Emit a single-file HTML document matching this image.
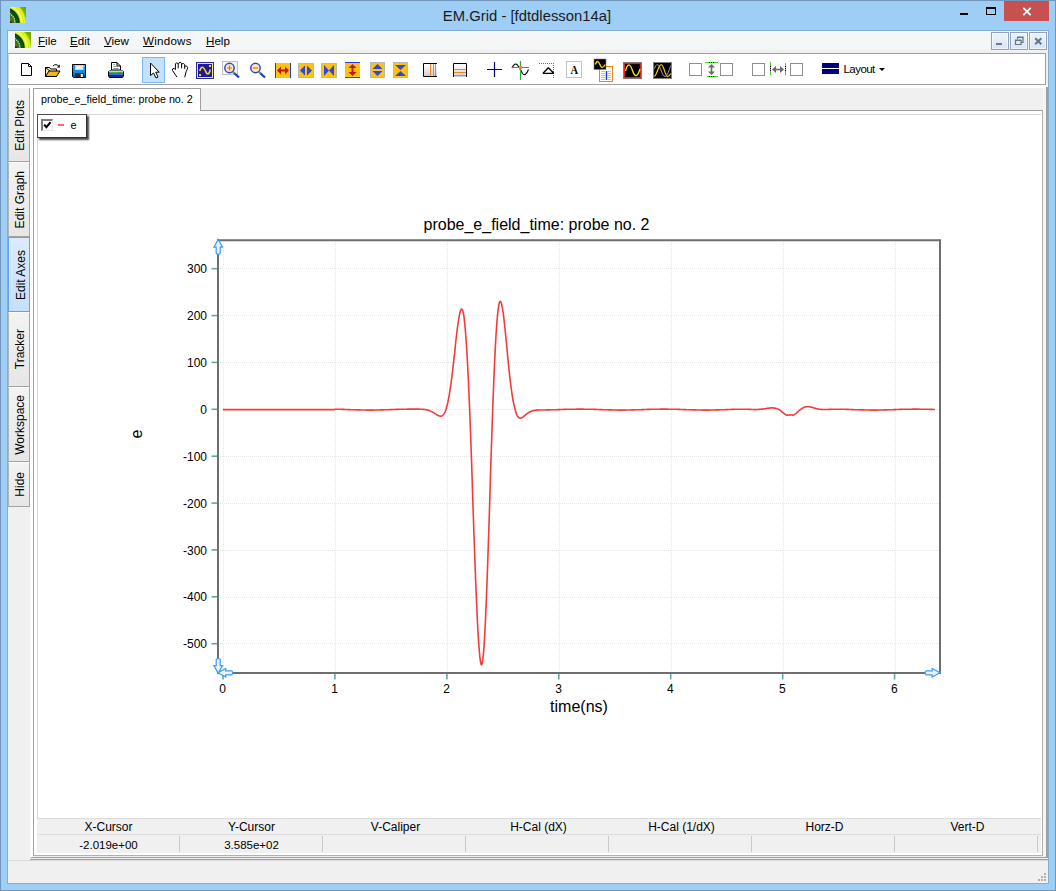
<!DOCTYPE html>
<html>
<head>
<meta charset="utf-8">
<title>EM.Grid - [fdtdlesson14a]</title>
<style>
*{box-sizing:border-box;margin:0;padding:0}
html,body{width:1056px;height:891px;overflow:hidden}
body{position:relative;background:#9ecef5;font-family:"Liberation Sans",sans-serif;color:#000}
.abs{position:absolute}
#frame{left:0;top:0;width:1056px;height:891px;border:1px solid #7097ba}
#title{left:-1px;top:5.5px;width:1056px;text-align:center;font-size:14.85px;line-height:20px;color:#1a1a1a}
#client{left:8px;top:31px;width:1040px;height:852px;background:#f0f0f0}
#menubar{left:8px;top:31px;width:1040px;height:18px;background:#f5f6f7}
.menu{top:34px;font-size:11.6px;line-height:14px;height:16px;white-space:nowrap}
.menu u{text-decoration:underline;text-underline-offset:1px;text-decoration-thickness:1px}
#toolbar{left:8px;top:53px;width:1038px;height:32px;background:#fff;border-top:1px solid #a0a0a0;border-bottom:1px solid #a0a0a0;border-left:1px solid #d4d4d4;border-right:1px solid #a0a0a0}
.vtab{left:8px;width:22px;background:linear-gradient(#f3f3f3,#e6e6e6);border-left:1px solid #b4b4b4;border-right:1px solid #a6a6a6;border-bottom:1px solid #a3a3a3;border-top:1px solid #fafafa;display:flex;align-items:center;justify-content:center}
.vtab span{font-kerning:none;writing-mode:vertical-rl;transform:rotate(180deg);white-space:nowrap;font-size:12px;line-height:14px;position:relative;left:0.5px;top:0px}
.hdr{top:820px;font-size:12px;line-height:14px;text-align:center;width:143px}
.val{top:838px;font-size:11.5px;line-height:14px;text-align:center;width:143px}
.sep{top:836px;width:1px;height:16px;background:#c8c8c8}
.cb{top:63px;width:13px;height:13px;border:1px solid #8e8f8f;background:#fff}
</style>
</head>
<body>
<div id="frame" class="abs"></div>
<div id="title" class="abs">EM.Grid - [fdtdlesson14a]</div>

<!-- window buttons -->
<div class="abs" style="left:960px;top:13px;width:8px;height:2px;background:#000"></div>
<div class="abs" style="left:986px;top:7px;width:10px;height:8px;border:1px solid #000;border-top-width:2px"></div>
<div class="abs" style="left:1004px;top:1px;width:45px;height:20px;background:#c75050"></div>
<svg class="abs" style="left:1004px;top:1px" width="45" height="20"><path d="M19.3 6.8 L26.7 14.2 M26.7 6.8 L19.3 14.2" stroke="#fff" stroke-width="1.8" fill="none"/></svg>

<div class="abs" style="left:7px;top:30px;width:1042px;height:854px;border:1px solid #84aed6"></div>
<div id="client" class="abs"></div>
<div id="menubar" class="abs"></div>
<div class="abs" style="left:8px;top:49px;width:1040px;height:4px;background:linear-gradient(#f3f3f4,#eeeeee)"></div>

<!-- app icons -->
<svg class="abs" style="left:10px;top:7px" width="16" height="16" viewBox="0 0 16 16">
<defs><clipPath id="ac"><rect width="16" height="16"/></clipPath>
<radialGradient id="ag" gradientUnits="userSpaceOnUse" cx="-6" cy="16" r="26">
<stop offset="0" stop-color="#56841a"/><stop offset="0.30" stop-color="#4e7c10"/><stop offset="0.41" stop-color="#3a6808"/>
<stop offset="0.45" stop-color="#0c4c0a"/><stop offset="0.52" stop-color="#0a5a10"/><stop offset="0.585" stop-color="#003a00"/><stop offset="0.615" stop-color="#98c418"/>
<stop offset="0.65" stop-color="#f2f83a"/><stop offset="0.72" stop-color="#f8fc44"/><stop offset="0.755" stop-color="#c4e426"/>
<stop offset="0.785" stop-color="#eef63a"/><stop offset="0.83" stop-color="#b8ee10"/><stop offset="0.875" stop-color="#82b600"/><stop offset="1" stop-color="#74a200"/>
</radialGradient></defs>
<g clip-path="url(#ac)">
<rect width="16" height="16" fill="url(#ag)"/>
<circle cx="-6" cy="16" r="11" fill="none" stroke="#f4f4ee" stroke-width="1.300" stroke-dasharray="1.200 1"/>
<circle cx="0" cy="16.500" r="2.600" fill="#2c2432"/>
</g></svg>
<svg class="abs" style="left:15px;top:32px" width="16" height="16" viewBox="0 0 16 16">
<defs><clipPath id="bc"><rect width="16" height="16"/></clipPath>
<radialGradient id="bg" gradientUnits="userSpaceOnUse" cx="-6" cy="16" r="26">
<stop offset="0" stop-color="#56841a"/><stop offset="0.30" stop-color="#4e7c10"/><stop offset="0.41" stop-color="#3a6808"/>
<stop offset="0.45" stop-color="#0c4c0a"/><stop offset="0.52" stop-color="#0a5a10"/><stop offset="0.585" stop-color="#003a00"/><stop offset="0.615" stop-color="#98c418"/>
<stop offset="0.65" stop-color="#f2f83a"/><stop offset="0.72" stop-color="#f8fc44"/><stop offset="0.755" stop-color="#c4e426"/>
<stop offset="0.785" stop-color="#eef63a"/><stop offset="0.83" stop-color="#b8ee10"/><stop offset="0.875" stop-color="#82b600"/><stop offset="1" stop-color="#74a200"/>
</radialGradient></defs>
<g clip-path="url(#bc)">
<rect width="16" height="16" fill="url(#bg)"/>
<circle cx="-6" cy="16" r="11" fill="none" stroke="#f4f4ee" stroke-width="1.300" stroke-dasharray="1.200 1"/>
<circle cx="0" cy="16.500" r="2.600" fill="#2c2432"/>
</g></svg>

<div class="abs menu" style="left:38px"><u>F</u>ile</div>
<div class="abs menu" style="left:70px"><u>E</u>dit</div>
<div class="abs menu" style="left:104px"><u>V</u>iew</div>
<div class="abs menu" style="left:143px;letter-spacing:0.25px"><u>W</u>indows</div>
<div class="abs menu" style="left:206px"><u>H</u>elp</div>

<!-- MDI buttons -->
<div class="abs" style="left:991px;top:32px;width:18px;height:18px;background:linear-gradient(#edf3fb,#d8e5f4);border:1px solid #8ea2bd;box-shadow:inset 0 0 0 1px rgba(255,255,255,0.55)"></div>
<div class="abs" style="left:1010px;top:32px;width:18px;height:18px;background:linear-gradient(#edf3fb,#d8e5f4);border:1px solid #8ea2bd;box-shadow:inset 0 0 0 1px rgba(255,255,255,0.55)"></div>
<div class="abs" style="left:1029px;top:32px;width:18px;height:18px;background:linear-gradient(#edf3fb,#d8e5f4);border:1px solid #8ea2bd;box-shadow:inset 0 0 0 1px rgba(255,255,255,0.55)"></div>
<svg class="abs" style="left:991px;top:32px" width="56" height="18">
<rect x="5" y="11" width="6" height="2" fill="#6b7b8f"/>
<path d="M26.5 7 v-1.500 h5.500 v5 h-1.500 M24.500 8.500 h5.500 v4 h-5.500 z" stroke="#64758a" stroke-width="1.2" fill="none"/><path d="M26 5.300 h6.500 M24 8.300 h6.500" stroke="#64758a" stroke-width="1.600"/>
<path d="M44.200 6.200 L50.300 12.300 M50.300 6.200 L44.200 12.300" stroke="#64758a" stroke-width="2" fill="none"/>
</svg>

<div id="toolbar" class="abs"></div>
<svg class="abs" style="left:0;top:54px" width="1056" height="30" viewBox="0 54 1056 30">
<path d="M21.5 63.5 h7 l3 3 v9 h-10 z" fill="#fff" stroke="#000"/><path d="M28.5 63.5 v3 h3" fill="none" stroke="#000"/>
<path d="M45.5 67.5 h4 l1 1.5 h6 v2" fill="#ffe9a0" stroke="#000"/><path d="M45.5 67.5 v9 h11 z" fill="#ffe9a0" stroke="#000" stroke-width="1"/><path d="M45.5 76.5 l3.5 -5.5 h11 l-3.5 5.5 z" fill="#f5b800" stroke="#000"/><path d="M53 66 q3 -3 6 0.5" fill="none" stroke="#000"/><path d="M59.8 64.5 v3 h-3 z" fill="#000"/>
<defs><linearGradient id="gf" x1="0" y1="0" x2="0" y2="1"><stop offset="0" stop-color="#28a4ec"/><stop offset="0.6" stop-color="#1488e0"/><stop offset="1" stop-color="#1040b8"/></linearGradient></defs>
<path d="M72.500 64.500 h13 v13 h-12 l-1 -1 z" fill="url(#gf)" stroke="#000"/><rect x="75" y="65" width="8.500" height="5" fill="#d4d4d4"/><rect x="76" y="66" width="6.500" height="3" fill="#f0f0f0"/><rect x="75" y="73.300" width="9" height="4.200" fill="#2c2c2c"/><rect x="80.800" y="74" width="2" height="3" fill="#fff"/><rect x="84" y="65.500" width="1" height="1" fill="#d0e8f8"/>
<path d="M111.500 70 v-7.500 h5.500 l3.500 3.500 v4 z" fill="#fff" stroke="#000"/><path d="M117 62.500 v3.500 h3.500" fill="none" stroke="#000"/><path d="M113.500 64.500 h1.500 M113.500 66.500 h3 M113.500 68.500 h5" stroke="#8c8c8c"/><path d="M109.500 70.500 h13 l1 1.500 v4 l-1 1.500 h-13 l-1 -1.500 v-4 z" fill="#142a98" stroke="#000"/><rect x="109" y="70.500" width="14" height="1.600" fill="#a4e0ee"/><rect x="109" y="72.100" width="14" height="1.400" fill="#58b848"/><rect x="109" y="73.500" width="14" height="1.500" fill="#2c74d8"/><rect x="119" y="72.100" width="2.500" height="1.400" fill="#e83838"/>
<rect x="142.5" y="57.5" width="22" height="25" fill="#c3e0fd" stroke="#7cb9f2"/>
<path d="M150.500 63 v12.500 l3 -2.500 l2.500 5 l2 -1 l-2.300 -4.800 h3.500 z" fill="#fff" stroke="#000" stroke-linejoin="miter"/>
<path d="M176.800 76.800 L172.400 70.400 Q171.900 68.500 174 68.300 L175.400 69.700 V63.800 Q176.700 61.800 178.200 63.800 V68 M178.500 63.300 Q180.200 61 181.600 63.300 V68 M181.900 63.900 Q183.400 62.500 184.700 64.500 V68.500 M185 66.100 Q186.800 65 187.600 67.400 Q187.400 69.500 186.200 71.500 L184.800 76.800" fill="none" stroke="#000" stroke-width="1" stroke-linejoin="round" stroke-linecap="round"/>
<rect x="196" y="62" width="18" height="17" fill="#2c2ca0"/><rect x="197.500" y="63.500" width="15" height="14" fill="#1c1c98" stroke="#f0e4b0"/><path d="M199.800 71 Q201 66.500 203 67.500 Q204.500 68.500 205.500 71 Q206.500 74 208 74 Q209.500 73.500 210.200 69.500" fill="none" stroke="#f8d820" stroke-width="1.500"/><rect x="209" y="65" width="2" height="2" fill="#f8d820"/><rect x="199" y="74" width="2" height="2" fill="#f8d820"/>
<rect x="222.500" y="61.500" width="15" height="13" fill="#f4f4f4" stroke="#c0c0c0"/>
<path d="M233.0 72 l6 5.500" stroke="#2038c8" stroke-width="2.200" fill="none"/><path d="M232.5 71.5 l2 2" stroke="#80c020" stroke-width="1.500" fill="none"/><circle cx="229.5" cy="68" r="4.700" fill="#f8e8c0" stroke="#3048d0" stroke-width="1.500"/><path d="M227.0 68 h5 M229.5 65.5 v5" stroke="#f07010" stroke-width="1.200"/>
<path d="M259.0 72 l6 5.500" stroke="#2038c8" stroke-width="2.200" fill="none"/><path d="M258.5 71.5 l2 2" stroke="#80c020" stroke-width="1.500" fill="none"/><circle cx="255.5" cy="68" r="4.700" fill="#f8e8c0" stroke="#3048d0" stroke-width="1.500"/><path d="M253.0 68 h5" stroke="#f07010" stroke-width="1.200"/>
<rect x="275" y="63" width="16" height="15" fill="#ffc20e"/><path d="M275.500 63 v15 M290.500 63 v15" stroke="#2040d0"/><path d="M277 70.500 l4 -4 v8 z M289 70.500 l-4 -4 v8 z" fill="#c01818"/><path d="M280 70.500 h6" stroke="#c01818" stroke-width="2"/>
<rect x="298.500" y="63.500" width="15" height="14" fill="#ffc20e" stroke="#b8b8b8"/><path d="M300 70.500 l5 -5 v10 z M312 70.500 l-5 -5 v10 z" fill="#3048d8"/>
<rect x="321.500" y="63.500" width="15" height="14" fill="#ffc20e" stroke="#b8b8b8"/><path d="M324 65 l5 5.500 l-5 5.500 z M334 65 l-5 5.500 l5 5.500 z" fill="#3048d8"/>
<rect x="345" y="62" width="15" height="16" fill="#ffc20e"/><path d="M345 62.500 h15 M345 77.500 h15" stroke="#2040d0"/><path d="M352.500 64 l-4 4 h8 z M352.500 76 l-4 -4 h8 z" fill="#c01818"/><path d="M352.500 67 v6" stroke="#c01818" stroke-width="2"/>
<rect x="370.500" y="62.500" width="14" height="15" fill="#ffc20e" stroke="#b8b8b8"/><path d="M377.500 64 l-5 5 h10 z M377.500 76 l-5 -5 h10 z" fill="#3048d8"/>
<rect x="393.500" y="62.500" width="14" height="15" fill="#ffc20e" stroke="#b8b8b8"/><path d="M395 65 h11 l-5.500 5 z M395 76 h11 l-5.500 -5 z" fill="#3048d8"/>
<defs><linearGradient id="gv" x1="0" y1="0" x2="0" y2="1"><stop offset="0" stop-color="#ffffff"/><stop offset="1" stop-color="#d0d0d0"/></linearGradient></defs>
<rect x="424" y="64" width="13" height="12" fill="url(#gv)"/><path d="M437 63.500 h-13.500 v13 h13.500" fill="none" stroke="#000"/><path d="M430.500 64 v12 M433.500 64 v12 M435.500 64 v12" stroke="#f58220"/>
<rect x="454" y="64" width="12" height="13" fill="url(#gv)"/><path d="M453.500 77 v-13.500 h13 v13.500" fill="none" stroke="#000"/><path d="M454 69.500 h12 M454 72.500 h12 M454 75.500 h12" stroke="#f58220"/>
<path d="M487 69.500 h15 M494.500 62 v15" stroke="#000080" stroke-width="1.200"/>
<path d="M512 68 q2.500 -6 5.500 -3 l2.500 4 l2.500 4.500 q3 3.500 6 -4" fill="none" stroke="#000" stroke-width="1.100"/><path d="M520.500 61 v19 M512 67.500 h17" stroke="#20b040" stroke-width="1.200"/><rect x="519" y="66" width="3" height="3" fill="#f58220"/>
<path d="M539 63.500 h15" stroke="#ff00ff" stroke-dasharray="1 1"/><path d="M553.500 63 v15" stroke="#ff00ff" stroke-dasharray="1 1"/><path d="M543 73.300 h10.800 l-5.400 -5.500 z" fill="#fff" stroke="#000" stroke-width="1.300" stroke-linejoin="bevel"/>
<rect x="566.500" y="61.500" width="15" height="16" fill="#fff" stroke="#c4c4c4"/><text transform="translate(574.300,74) scale(0.840,1.060)" text-anchor="middle" font-family="Liberation Serif,serif" font-weight="bold" font-size="12.500" fill="#000">A</text>
<rect x="599.500" y="66.500" width="13" height="15" fill="#fff" stroke="#f58220"/><path d="M601 71.500 h4 M601 73.500 h4 M601 75.500 h4 M601 77.500 h4 M601 79.500 h4 M608 71.500 h3 M608 73.500 h3 M608 75.500 h3 M608 77.500 h3 M608 79.500 h3" stroke="#c0c0c0"/><path d="M606.500 71 v9" stroke="#2030e0" stroke-width="1.400"/><rect x="594" y="59" width="12" height="10.500" fill="#000" stroke="#808080" stroke-width="0.600"/><path d="M595.300 64.500 C596 62.500 596.800 61.500 597.700 61.500 C599.700 61.500 600 67.500 601.900 67.500 C603.200 67.500 604.200 66.500 605.200 64.500" fill="none" stroke="#f8d010" stroke-width="1.400"/>
<rect x="623" y="62" width="19" height="17" fill="#808080"/><rect x="624.500" y="63.500" width="16" height="14" fill="#000" stroke="#e02020" stroke-width="1.200"/><path d="M625.500 71 q3 -12 7 -0.500 q3.500 11 7.500 -1.500" fill="none" stroke="#f8e010" stroke-width="1.400"/>
<rect x="653" y="62" width="19" height="17" fill="#808080"/><rect x="654" y="63" width="17" height="15" fill="#000"/><path d="M654.400 68.800 C655.500 66 656.300 64.500 657.300 64.500 C660.300 64.500 662 76.500 665 76.500 C667.500 76.500 669 70 670.600 65.800" fill="none" stroke="#a0a0a0" stroke-width="1"/><path d="M654.400 76.500 C657 75 658.500 64.500 661.200 64.500 C664 64.500 665 76.500 667.600 76.500 C669 76.500 670 75 670.800 73.500" fill="none" stroke="#f8c010" stroke-width="1.250"/>
<path d="M705 62.500 h13 M707 76.500 h11" stroke="#40d020"/><path d="M709 62.500 h5 M709 76.500 h5" stroke="#000" stroke-dasharray="1 1"/><path d="M711.500 64 l-3.500 3.500 h7 z M711.500 75 l-3.500 -3.500 h7 z" fill="#6a6a6a"/><path d="M711.500 67 v5" stroke="#6a6a6a" stroke-width="1.600"/>
<path d="M770.500 62 v13 M785.500 63 v12" stroke="#40d020"/><path d="M770.500 66 v6 M785.500 66 v6" stroke="#000" stroke-dasharray="1 1"/><path d="M772 69.500 l4 -3.500 v7 z M784 69.500 l-4 -3.500 v7 z" fill="#6a6a6a"/><path d="M775 69.500 h6" stroke="#6a6a6a" stroke-width="1.600"/>
<rect x="822" y="63" width="17" height="5" fill="#000080"/><rect x="822" y="69" width="17" height="5" fill="#000080"/>
<path d="M879 68 h6 l-3 3 z" fill="#000"/>
</svg>
<div class="abs cb" style="left:689px"></div>
<div class="abs cb" style="left:720px"></div>
<div class="abs cb" style="left:752px"></div>
<div class="abs cb" style="left:790px"></div>
<div class="abs" style="left:843.5px;top:61.5px;font-size:11.5px;line-height:14px;letter-spacing:-0.55px">Layout</div>

<!-- left vertical tabs -->
<div class="abs vtab" style="top:87px;height:75px;border-top-color:#c8c8c8"><span style="top:0.5px">Edit Plots</span></div>
<div class="abs vtab" style="top:162px;height:75px"><span>Edit Graph</span></div>
<div class="abs vtab" style="top:237px;height:75px;background:linear-gradient(#dcebfc,#c6dffa);border:1px solid #62a4e8"><span style="left:1.5px;top:1px">Edit Axes</span></div>
<div class="abs vtab" style="top:312px;height:75px"><span>Tracker</span></div>
<div class="abs vtab" style="top:387px;height:75px"><span>Workspace</span></div>
<div class="abs vtab" style="top:462px;height:45px"><span>Hide</span></div>

<!-- MDI area borders -->
<div class="abs" style="left:8px;top:85px;width:1040px;height:3px;background:#fff"></div>
<div class="abs" style="left:30px;top:88px;width:3px;height:769px;background:#fff"></div>
<div class="abs" style="left:1046px;top:87px;width:2px;height:773px;background:#a0a0a0"></div>
<div class="abs" style="left:31px;top:857px;width:1017px;height:1px;background:#a0a0a0"></div>
<div class="abs" style="left:30px;top:858px;width:1018px;height:1px;background:#eeeeee"></div>
<div class="abs" style="left:30px;top:859px;width:1018px;height:1px;background:#a0a0a0"></div>
<div class="abs" style="left:8px;top:860px;width:1040px;height:1px;background:#dadada"></div>
<div class="abs" style="left:1043px;top:88px;width:3px;height:769px;background:#f5f5f5"></div>
<div class="abs" style="left:33px;top:856px;width:1013px;height:1px;background:#eeeeee"></div>
<div class="abs" style="left:33px;top:110px;width:1010px;height:746px;border:1px solid #a0a0a0;border-right-color:#b0b0b0;border-bottom-color:#b0b0b0;background:#fff"></div>
<!-- document tab -->
<div class="abs" style="left:33px;top:88px;width:168px;height:23px;background:#fff;border:1px solid #a0a0a0;border-bottom:none"></div>
<div class="abs" style="left:41px;top:93px;font-size:10.75px;line-height:13px;white-space:nowrap">probe_e_field_time: probe no. 2</div>

<!-- plot panel -->
<div class="abs" style="left:37px;top:114px;width:1004px;height:705px;border-top:1px solid #d6d6d6;border-left:1px solid #d6d6d6;background:#fff"></div>

<!-- legend -->
<div class="abs" style="left:37px;top:114px;width:50px;height:23.5px;background:#fff;border:1px solid #4c4c4c;border-right-color:#303030;border-bottom-color:#303030;box-shadow:2px 2px 1.5px rgba(20,20,20,0.75)"></div>
<div class="abs" style="left:41px;top:119px;width:12px;height:12px;background:#fff;border-right:1px solid #e4e4e4;border-bottom:1px solid #e4e4e4;border-top:2px solid #7c7c7c;border-left:2px solid #7c7c7c"></div>
<svg class="abs" style="left:41px;top:119px" width="13" height="13"><path d="M3.2 5.6 L5.4 8.2 L9.6 3.2" stroke="#000" stroke-width="2" fill="none"/></svg>
<div class="abs" style="left:58px;top:124px;width:6px;height:2px;background:#fa6872"></div>
<div class="abs" style="left:70.5px;top:118px;font-size:11px;line-height:14px">e</div>

<svg class="abs" style="left:0;top:200px" width="1056" height="530" viewBox="0 200 1056 530" font-family="Liberation Sans,sans-serif">
<path d="M223.5 242 V672" stroke="#e6e6e6" stroke-dasharray="1 1"/>
<path d="M335.5 242 V672" stroke="#e6e6e6" stroke-dasharray="1 1"/>
<path d="M447.5 242 V672" stroke="#e6e6e6" stroke-dasharray="1 1"/>
<path d="M559.5 242 V672" stroke="#e6e6e6" stroke-dasharray="1 1"/>
<path d="M671.5 242 V672" stroke="#e6e6e6" stroke-dasharray="1 1"/>
<path d="M783.5 242 V672" stroke="#e6e6e6" stroke-dasharray="1 1"/>
<path d="M895.5 242 V672" stroke="#e6e6e6" stroke-dasharray="1 1"/>
<path d="M220 643.5 H939" stroke="#e6e6e6" stroke-dasharray="1 1"/>
<path d="M220 597.5 H939" stroke="#e6e6e6" stroke-dasharray="1 1"/>
<path d="M220 550.5 H939" stroke="#e6e6e6" stroke-dasharray="1 1"/>
<path d="M220 503.5 H939" stroke="#e6e6e6" stroke-dasharray="1 1"/>
<path d="M220 456.5 H939" stroke="#e6e6e6" stroke-dasharray="1 1"/>
<path d="M220 409.5 H939" stroke="#e6e6e6" stroke-dasharray="1 1"/>
<path d="M220 362.5 H939" stroke="#e6e6e6" stroke-dasharray="1 1"/>
<path d="M220 315.5 H939" stroke="#e6e6e6" stroke-dasharray="1 1"/>
<path d="M220 268.5 H939" stroke="#e6e6e6" stroke-dasharray="1 1"/>
<polyline points="223.0,409.6 223.6,409.6 224.2,409.6 224.8,409.6 225.4,409.6 226.0,409.6 226.6,409.6 227.2,409.6 227.7,409.6 228.3,409.6 228.9,409.6 229.5,409.6 230.1,409.6 230.7,409.6 231.3,409.6 231.9,409.6 232.5,409.6 233.1,409.6 233.7,409.6 234.3,409.6 234.9,409.6 235.5,409.6 236.1,409.6 236.6,409.6 237.2,409.6 237.8,409.6 238.4,409.6 239.0,409.6 239.6,409.6 240.2,409.6 240.8,409.6 241.4,409.6 242.0,409.6 242.6,409.6 243.2,409.6 243.8,409.6 244.4,409.6 244.9,409.6 245.5,409.6 246.1,409.6 246.7,409.6 247.3,409.6 247.9,409.6 248.5,409.6 249.1,409.6 249.7,409.6 250.3,409.6 250.9,409.6 251.5,409.6 252.1,409.6 252.7,409.6 253.3,409.6 253.8,409.6 254.4,409.6 255.0,409.6 255.6,409.6 256.2,409.6 256.8,409.6 257.4,409.6 258.0,409.6 258.6,409.6 259.2,409.6 259.8,409.6 260.4,409.6 261.0,409.6 261.6,409.6 262.2,409.6 262.7,409.6 263.3,409.6 263.9,409.6 264.5,409.6 265.1,409.6 265.7,409.6 266.3,409.6 266.9,409.6 267.5,409.6 268.1,409.6 268.7,409.6 269.3,409.6 269.9,409.6 270.5,409.6 271.1,409.6 271.6,409.6 272.2,409.6 272.8,409.6 273.4,409.6 274.0,409.6 274.6,409.6 275.2,409.6 275.8,409.6 276.4,409.6 277.0,409.6 277.6,409.6 278.2,409.6 278.8,409.6 279.4,409.6 279.9,409.6 280.5,409.6 281.1,409.6 281.7,409.6 282.3,409.6 282.9,409.6 283.5,409.6 284.1,409.6 284.7,409.6 285.3,409.6 285.9,409.6 286.5,409.6 287.1,409.6 287.7,409.6 288.3,409.6 288.8,409.6 289.4,409.6 290.0,409.6 290.6,409.6 291.2,409.6 291.8,409.6 292.4,409.6 293.0,409.6 293.6,409.6 294.2,409.6 294.8,409.6 295.4,409.6 296.0,409.6 296.6,409.6 297.2,409.6 297.7,409.6 298.3,409.6 298.9,409.6 299.5,409.6 300.1,409.6 300.7,409.6 301.3,409.6 301.9,409.6 302.5,409.6 303.1,409.6 303.7,409.6 304.3,409.6 304.9,409.6 305.5,409.6 306.1,409.6 306.6,409.6 307.2,409.6 307.8,409.6 308.4,409.6 309.0,409.6 309.6,409.6 310.2,409.6 310.8,409.6 311.4,409.6 312.0,409.6 312.6,409.6 313.2,409.6 313.8,409.6 314.4,409.6 315.0,409.6 315.5,409.6 316.1,409.6 316.7,409.6 317.3,409.6 317.9,409.6 318.5,409.6 319.1,409.6 319.7,409.6 320.3,409.6 320.9,409.6 321.5,409.6 322.1,409.6 322.7,409.6 323.3,409.6 323.8,409.6 324.4,409.6 325.0,409.6 325.6,409.6 326.2,409.6 326.8,409.6 327.4,409.6 328.0,409.6 328.6,409.6 329.2,409.6 329.8,409.6 330.4,409.6 331.0,409.6 331.6,409.6 332.2,409.6 332.7,409.6 333.3,409.6 333.9,409.6 334.5,409.6 335.1,409.2 335.7,409.2 336.3,409.2 336.9,409.2 337.5,409.2 338.1,409.3 338.7,409.3 339.3,409.3 339.9,409.3 340.5,409.3 341.1,409.3 341.6,409.4 342.2,409.4 342.8,409.4 343.4,409.4 344.0,409.4 344.6,409.5 345.2,409.5 345.8,409.5 346.4,409.5 347.0,409.5 347.6,409.6 348.2,409.6 348.8,409.6 349.4,409.6 350.0,409.6 350.5,409.7 351.1,409.7 351.7,409.7 352.3,409.7 352.9,409.7 353.5,409.8 354.1,409.8 354.7,409.8 355.3,409.8 355.9,409.8 356.5,409.9 357.1,409.9 357.7,409.9 358.3,409.9 358.8,409.9 359.4,409.9 360.0,409.9 360.6,410.0 361.2,410.0 361.8,410.0 362.4,410.0 363.0,410.0 363.6,410.0 364.2,410.0 364.8,410.0 365.4,410.0 366.0,410.0 366.6,410.1 367.2,410.1 367.7,410.1 368.3,410.1 368.9,410.1 369.5,410.1 370.1,410.1 370.7,410.1 371.3,410.1 371.9,410.1 372.5,410.1 373.1,410.1 373.7,410.1 374.3,410.0 374.9,410.0 375.5,410.0 376.1,410.0 376.6,410.0 377.2,410.0 377.8,410.0 378.4,410.0 379.0,410.0 379.6,410.0 380.2,409.9 380.8,409.9 381.4,409.9 382.0,409.9 382.6,409.9 383.2,409.9 383.8,409.8 384.4,409.8 385.0,409.8 385.5,409.8 386.1,409.8 386.7,409.7 387.3,409.7 387.9,409.7 388.5,409.7 389.1,409.7 389.7,409.6 390.3,409.6 390.9,409.6 391.5,409.6 392.1,409.6 392.7,409.5 393.3,409.5 393.8,409.5 394.4,409.5 395.0,409.5 395.6,409.4 396.2,409.4 396.8,409.4 397.4,409.4 398.0,409.4 398.6,409.3 399.2,409.3 399.8,409.3 400.4,409.3 401.0,409.3 401.6,409.3 402.2,409.2 402.7,409.2 403.3,409.2 403.9,409.2 404.5,409.2 405.1,409.2 405.7,409.2 406.3,409.2 406.9,409.2 407.5,409.1 408.1,409.1 408.7,409.1 409.3,409.1 409.9,409.1 410.5,409.1 411.1,409.1 411.6,409.1 412.2,409.1 412.8,409.1 413.4,409.1 414.0,409.1 414.6,409.1 415.2,409.1 415.8,409.1 416.4,409.1 417.0,409.1 417.6,409.1 418.2,409.1 418.8,409.1 419.4,409.1 420.0,409.2 420.5,409.2 421.1,409.2 421.7,409.2 422.3,409.3 422.9,409.3 423.5,409.4 424.1,409.4 424.7,409.5 425.3,409.6 425.9,409.7 426.5,409.8 427.1,409.9 427.7,410.1 428.3,410.3 428.9,410.4 429.4,410.7 430.0,410.9 430.6,411.1 431.2,411.4 431.8,411.7 432.4,412.0 433.0,412.4 433.6,412.7 434.2,413.1 434.8,413.5 435.4,413.8 436.0,414.2 436.6,414.6 437.2,415.0 437.7,415.3 438.3,415.6 438.9,415.8 439.5,416.0 440.1,416.1 440.7,416.2 441.3,416.1 441.9,415.9 442.5,415.5 443.1,415.0 443.7,414.3 444.3,413.4 444.9,412.3 445.5,411.0 446.1,409.3 446.6,407.3 447.2,405.1 447.8,402.5 448.4,399.6 449.0,396.4 449.6,392.8 450.2,389.0 450.8,384.8 451.4,380.4 452.0,375.7 452.6,370.8 453.2,365.7 453.8,360.4 454.4,355.1 455.0,349.7 455.5,344.3 456.1,339.0 456.7,333.9 457.3,329.0 457.9,324.5 458.5,320.3 459.1,316.7 459.7,313.7 460.3,311.3 460.9,309.8 461.5,309.0 462.1,309.2 462.7,310.4 463.3,312.7 463.9,316.0 464.4,320.6 465.0,326.3 465.6,333.2 466.2,341.3 466.8,350.6 467.4,361.0 468.0,372.6 468.6,385.1 469.2,398.7 469.8,413.2 470.4,429.1 471.0,445.6 471.6,462.6 472.2,479.9 472.7,497.5 473.3,515.0 473.9,532.4 474.5,549.3 475.1,565.8 475.7,581.5 476.3,596.3 476.9,610.0 477.5,622.5 478.1,633.5 478.7,643.1 479.3,651.0 479.9,657.2 480.5,661.6 481.1,664.2 481.6,664.8 482.2,663.4 482.8,659.9 483.4,654.2 484.0,646.6 484.6,637.1 485.2,625.8 485.8,612.9 486.4,598.5 487.0,582.9 487.6,566.2 488.2,548.7 488.8,530.6 489.4,512.1 490.0,493.4 490.5,474.7 491.1,456.3 491.7,438.4 492.3,421.1 492.9,404.5 493.5,388.6 494.1,373.9 494.7,360.4 495.3,348.2 495.9,337.3 496.5,327.9 497.1,320.0 497.7,313.5 498.3,308.4 498.9,304.8 499.4,302.4 500.0,301.4 500.6,301.5 501.2,302.7 501.8,304.9 502.4,308.0 503.0,311.8 503.6,316.3 504.2,321.3 504.8,326.8 505.4,332.6 506.0,338.6 506.6,344.7 507.2,350.9 507.7,357.0 508.3,362.9 508.9,368.7 509.5,374.2 510.1,379.5 510.7,384.4 511.3,389.0 511.9,393.2 512.5,397.1 513.1,400.5 513.7,403.6 514.3,406.3 514.9,408.6 515.5,410.8 516.1,412.7 516.6,414.3 517.2,415.6 517.8,416.6 518.4,417.3 519.0,417.8 519.6,418.0 520.2,418.1 520.8,418.1 521.4,417.9 522.0,417.6 522.6,417.3 523.2,416.9 523.8,416.4 524.4,415.9 525.0,415.4 525.5,414.9 526.1,414.4 526.7,414.0 527.3,413.5 527.9,413.1 528.5,412.7 529.1,412.3 529.7,412.0 530.3,411.7 530.9,411.4 531.5,411.2 532.1,411.0 532.7,410.8 533.3,410.6 533.9,410.5 534.4,410.4 535.0,410.3 535.6,410.2 536.2,410.2 536.8,410.1 537.4,410.1 538.0,410.0 538.6,410.0 539.2,410.0 539.8,410.0 540.4,410.0 541.0,410.0 541.6,410.0 542.2,410.0 542.8,410.0 543.3,410.0 543.9,410.0 544.5,410.0 545.1,410.0 545.7,410.0 546.3,409.9 546.9,409.9 547.5,409.9 548.1,409.9 548.7,409.9 549.3,409.9 549.9,409.9 550.5,409.9 551.1,409.8 551.6,409.8 552.2,409.8 552.8,409.8 553.4,409.8 554.0,409.8 554.6,409.7 555.2,409.7 555.8,409.7 556.4,409.7 557.0,409.7 557.6,409.6 558.2,409.6 558.8,409.6 559.4,409.6 560.0,409.6 560.5,409.5 561.1,409.5 561.7,409.5 562.3,409.5 562.9,409.5 563.5,409.4 564.1,409.4 564.7,409.4 565.3,409.4 565.9,409.4 566.5,409.3 567.1,409.3 567.7,409.3 568.3,409.3 568.9,409.3 569.4,409.3 570.0,409.3 570.6,409.2 571.2,409.2 571.8,409.2 572.4,409.2 573.0,409.2 573.6,409.2 574.2,409.2 574.8,409.2 575.4,409.2 576.0,409.2 576.6,409.1 577.2,409.1 577.8,409.1 578.3,409.1 578.9,409.1 579.5,409.1 580.1,409.1 580.7,409.1 581.3,409.1 581.9,409.1 582.5,409.1 583.1,409.1 583.7,409.2 584.3,409.2 584.9,409.2 585.5,409.2 586.1,409.2 586.6,409.2 587.2,409.2 587.8,409.2 588.4,409.2 589.0,409.2 589.6,409.3 590.2,409.3 590.8,409.3 591.4,409.3 592.0,409.3 592.6,409.3 593.2,409.3 593.8,409.4 594.4,409.4 595.0,409.4 595.5,409.4 596.1,409.4 596.7,409.5 597.3,409.5 597.9,409.5 598.5,409.5 599.1,409.5 599.7,409.6 600.3,409.6 600.9,409.6 601.5,409.6 602.1,409.6 602.7,409.7 603.3,409.7 603.9,409.7 604.4,409.7 605.0,409.7 605.6,409.8 606.2,409.8 606.8,409.8 607.4,409.8 608.0,409.8 608.6,409.9 609.2,409.9 609.8,409.9 610.4,409.9 611.0,409.9 611.6,409.9 612.2,410.0 612.8,410.0 613.3,410.0 613.9,410.0 614.5,410.0 615.1,410.0 615.7,410.0 616.3,410.0 616.9,410.0 617.5,410.0 618.1,410.1 618.7,410.1 619.3,410.1 619.9,410.1 620.5,410.1 621.1,410.1 621.6,410.1 622.2,410.1 622.8,410.1 623.4,410.1 624.0,410.1 624.6,410.1 625.2,410.1 625.8,410.0 626.4,410.0 627.0,410.0 627.6,410.0 628.2,410.0 628.8,410.0 629.4,410.0 630.0,410.0 630.5,410.0 631.1,410.0 631.7,409.9 632.3,409.9 632.9,409.9 633.5,409.9 634.1,409.9 634.7,409.9 635.3,409.8 635.9,409.8 636.5,409.8 637.1,409.8 637.7,409.8 638.3,409.8 638.9,409.7 639.4,409.7 640.0,409.7 640.6,409.7 641.2,409.7 641.8,409.6 642.4,409.6 643.0,409.6 643.6,409.6 644.2,409.5 644.8,409.5 645.4,409.5 646.0,409.5 646.6,409.5 647.2,409.4 647.8,409.4 648.3,409.4 648.9,409.4 649.5,409.4 650.1,409.4 650.7,409.3 651.3,409.3 651.9,409.3 652.5,409.3 653.1,409.3 653.7,409.3 654.3,409.2 654.9,409.2 655.5,409.2 656.1,409.2 656.7,409.2 657.2,409.2 657.8,409.2 658.4,409.2 659.0,409.2 659.6,409.2 660.2,409.1 660.8,409.1 661.4,409.1 662.0,409.1 662.6,409.1 663.2,409.1 663.8,409.1 664.4,409.1 665.0,409.1 665.5,409.1 666.1,409.1 666.7,409.1 667.3,409.1 667.9,409.2 668.5,409.2 669.1,409.2 669.7,409.2 670.3,409.2 670.9,409.2 671.5,409.2 672.1,409.2 672.7,409.2 673.3,409.2 673.9,409.3 674.4,409.3 675.0,409.3 675.6,409.3 676.2,409.3 676.8,409.3 677.4,409.4 678.0,409.4 678.6,409.4 679.2,409.4 679.8,409.4 680.4,409.5 681.0,409.5 681.6,409.5 682.2,409.5 682.8,409.5 683.3,409.6 683.9,409.6 684.5,409.6 685.1,409.6 685.7,409.6 686.3,409.7 686.9,409.7 687.5,409.7 688.1,409.7 688.7,409.7 689.3,409.8 689.9,409.8 690.5,409.8 691.1,409.8 691.7,409.8 692.2,409.9 692.8,409.9 693.4,409.9 694.0,409.9 694.6,409.9 695.2,409.9 695.8,409.9 696.4,410.0 697.0,410.0 697.6,410.0 698.2,410.0 698.8,410.0 699.4,410.0 700.0,410.0 700.5,410.0 701.1,410.0 701.7,410.0 702.3,410.1 702.9,410.1 703.5,410.1 704.1,410.1 704.7,410.1 705.3,410.1 705.9,410.1 706.5,410.1 707.1,410.1 707.7,410.1 708.3,410.1 708.9,410.1 709.4,410.1 710.0,410.0 710.6,410.0 711.2,410.0 711.8,410.0 712.4,410.0 713.0,410.0 713.6,410.0 714.2,410.0 714.8,410.0 715.4,410.0 716.0,409.9 716.6,409.9 717.2,409.9 717.8,409.9 718.3,409.9 718.9,409.9 719.5,409.8 720.1,409.8 720.7,409.8 721.3,409.8 721.9,409.8 722.5,409.7 723.1,409.7 723.7,409.7 724.3,409.7 724.9,409.7 725.5,409.6 726.1,409.6 726.7,409.6 727.2,409.6 727.8,409.6 728.4,409.5 729.0,409.5 729.6,409.5 730.2,409.5 730.8,409.5 731.4,409.4 732.0,409.4 732.6,409.4 733.2,409.4 733.8,409.4 734.4,409.3 735.0,409.3 735.5,409.3 736.1,409.3 736.7,409.3 737.3,409.3 737.9,409.2 738.5,409.2 739.1,409.2 739.7,409.2 740.3,409.2 740.9,409.2 741.5,409.2 742.1,409.2 742.7,409.2 743.3,409.2 743.9,409.2 744.4,409.2 745.0,409.2 745.6,409.2 746.2,409.3 746.8,409.3 747.4,409.3 748.0,409.3 748.6,409.3 749.2,409.4 749.8,409.4 750.4,409.4 751.0,409.4 751.6,409.5 752.2,409.5 752.8,409.5 753.3,409.5 753.9,409.5 754.5,409.6 755.1,409.6 755.7,409.6 756.3,409.5 756.9,409.5 757.5,409.5 758.1,409.5 758.7,409.4 759.3,409.4 759.9,409.3 760.5,409.3 761.1,409.2 761.7,409.1 762.2,409.1 762.8,409.0 763.4,408.9 764.0,408.8 764.6,408.8 765.2,408.7 765.8,408.6 766.4,408.5 767.0,408.4 767.6,408.3 768.2,408.2 768.8,408.1 769.4,408.1 770.0,408.0 770.6,408.0 771.1,407.9 771.7,407.9 772.3,407.9 772.9,407.9 773.5,408.0 774.1,408.1 774.7,408.1 775.3,408.3 775.9,408.4 776.5,408.6 777.1,408.8 777.7,409.0 778.3,409.2 778.9,409.5 779.4,409.8 780.0,410.1 780.6,410.6 781.2,411.1 781.8,411.6 782.4,412.1 783.0,412.6 783.6,413.1 784.2,413.6 784.8,414.1 785.4,414.5 786.0,414.9 786.6,415.2 787.2,415.1 787.8,415.1 788.3,415.0 788.9,415.0 789.5,414.9 790.1,414.9 790.7,415.0 791.3,415.0 791.9,415.0 792.5,415.1 793.1,415.2 793.7,415.0 794.3,414.6 794.9,414.2 795.5,413.7 796.1,413.3 796.7,412.8 797.2,412.3 797.8,411.8 798.4,411.2 799.0,410.7 799.6,410.2 800.2,409.8 800.8,409.3 801.4,408.9 802.0,408.5 802.6,408.1 803.2,407.8 803.8,407.5 804.4,407.3 805.0,407.1 805.6,406.9 806.1,406.8 806.7,406.7 807.3,406.7 807.9,406.7 808.5,406.7 809.1,406.8 809.7,406.8 810.3,407.0 810.9,407.1 811.5,407.2 812.1,407.4 812.7,407.5 813.3,407.7 813.9,407.9 814.4,408.0 815.0,408.2 815.6,408.4 816.2,408.5 816.8,408.7 817.4,408.8 818.0,408.9 818.6,409.1 819.2,409.2 819.8,409.2 820.4,409.3 821.0,409.4 821.6,409.4 822.2,409.5 822.8,409.5 823.3,409.5 823.9,409.5 824.5,409.5 825.1,409.5 825.7,409.5 826.3,409.5 826.9,409.5 827.5,409.5 828.1,409.5 828.7,409.4 829.3,409.4 829.9,409.4 830.5,409.4 831.1,409.3 831.7,409.3 832.2,409.3 832.8,409.3 833.4,409.3 834.0,409.2 834.6,409.2 835.2,409.2 835.8,409.2 836.4,409.2 837.0,409.2 837.6,409.2 838.2,409.2 838.8,409.2 839.4,409.2 840.0,409.2 840.6,409.2 841.1,409.2 841.7,409.3 842.3,409.3 842.9,409.3 843.5,409.3 844.1,409.3 844.7,409.3 845.3,409.3 845.9,409.4 846.5,409.4 847.1,409.4 847.7,409.4 848.3,409.4 848.9,409.5 849.4,409.5 850.0,409.5 850.6,409.5 851.2,409.5 851.8,409.6 852.4,409.6 853.0,409.6 853.6,409.6 854.2,409.7 854.8,409.7 855.4,409.7 856.0,409.7 856.6,409.7 857.2,409.8 857.8,409.8 858.3,409.8 858.9,409.8 859.5,409.8 860.1,409.9 860.7,409.9 861.3,409.9 861.9,409.9 862.5,409.9 863.1,409.9 863.7,409.9 864.3,410.0 864.9,410.0 865.5,410.0 866.1,410.0 866.7,410.0 867.2,410.0 867.8,410.0 868.4,410.0 869.0,410.0 869.6,410.0 870.2,410.1 870.8,410.1 871.4,410.1 872.0,410.1 872.6,410.1 873.2,410.1 873.8,410.1 874.4,410.1 875.0,410.1 875.6,410.1 876.1,410.1 876.7,410.1 877.3,410.1 877.9,410.0 878.5,410.0 879.1,410.0 879.7,410.0 880.3,410.0 880.9,410.0 881.5,410.0 882.1,410.0 882.7,410.0 883.3,410.0 883.9,409.9 884.5,409.9 885.0,409.9 885.6,409.9 886.2,409.9 886.8,409.9 887.4,409.8 888.0,409.8 888.6,409.8 889.2,409.8 889.8,409.8 890.4,409.7 891.0,409.7 891.6,409.7 892.2,409.7 892.8,409.7 893.3,409.6 893.9,409.6 894.5,409.6 895.1,409.6 895.7,409.6 896.3,409.5 896.9,409.5 897.5,409.5 898.1,409.5 898.7,409.5 899.3,409.4 899.9,409.4 900.5,409.4 901.1,409.4 901.7,409.4 902.2,409.3 902.8,409.3 903.4,409.3 904.0,409.3 904.6,409.3 905.2,409.3 905.8,409.3 906.4,409.2 907.0,409.2 907.6,409.2 908.2,409.2 908.8,409.2 909.4,409.2 910.0,409.2 910.6,409.2 911.1,409.2 911.7,409.2 912.3,409.1 912.9,409.1 913.5,409.1 914.1,409.1 914.7,409.1 915.3,409.1 915.9,409.1 916.5,409.1 917.1,409.1 917.7,409.1 918.3,409.1 918.9,409.1 919.5,409.2 920.0,409.2 920.6,409.2 921.2,409.2 921.8,409.2 922.4,409.2 923.0,409.2 923.6,409.2 924.2,409.2 924.8,409.2 925.4,409.3 926.0,409.3 926.6,409.3 927.2,409.3 927.8,409.3 928.3,409.3 928.9,409.3 929.5,409.4 930.1,409.4 930.7,409.4 931.3,409.4 931.9,409.4 932.5,409.5 933.1,409.5 933.7,409.5 934.3,409.5 934.9,409.5" fill="none" stroke="#f23c3c" stroke-width="1.600" stroke-linejoin="round"/>
<path d="M218 240.300 H940 V673 H218 Z" fill="none" stroke="#6e6e6e" stroke-width="2"/>
<path d="M211.500 643.7 H217" stroke="#5fa9a4" stroke-width="1.600"/>
<text x="207" y="648.3" text-anchor="end" font-size="12">-500</text>
<path d="M211.500 596.8 H217" stroke="#5fa9a4" stroke-width="1.600"/>
<text x="207" y="601.4" text-anchor="end" font-size="12">-400</text>
<path d="M211.500 549.9 H217" stroke="#5fa9a4" stroke-width="1.600"/>
<text x="207" y="554.5" text-anchor="end" font-size="12">-300</text>
<path d="M211.500 503.1 H217" stroke="#5fa9a4" stroke-width="1.600"/>
<text x="207" y="507.7" text-anchor="end" font-size="12">-200</text>
<path d="M211.500 456.2 H217" stroke="#5fa9a4" stroke-width="1.600"/>
<text x="207" y="460.8" text-anchor="end" font-size="12">-100</text>
<path d="M211.500 409.3 H217" stroke="#5fa9a4" stroke-width="1.600"/>
<text x="207" y="413.9" text-anchor="end" font-size="12">0</text>
<path d="M211.500 362.4 H217" stroke="#5fa9a4" stroke-width="1.600"/>
<text x="207" y="367.0" text-anchor="end" font-size="12">100</text>
<path d="M211.500 315.6 H217" stroke="#5fa9a4" stroke-width="1.600"/>
<text x="207" y="320.2" text-anchor="end" font-size="12">200</text>
<path d="M211.500 268.7 H217" stroke="#5fa9a4" stroke-width="1.600"/>
<text x="207" y="273.3" text-anchor="end" font-size="12">300</text>
<path d="M223.0 674 V679.500" stroke="#5fa9a4" stroke-width="1.600"/>
<text x="222.7" y="692.500" text-anchor="middle" font-size="12">0</text>
<path d="M334.9 674 V679.500" stroke="#5fa9a4" stroke-width="1.600"/>
<text x="334.6" y="692.500" text-anchor="middle" font-size="12">1</text>
<path d="M446.9 674 V679.500" stroke="#5fa9a4" stroke-width="1.600"/>
<text x="446.6" y="692.500" text-anchor="middle" font-size="12">2</text>
<path d="M558.8 674 V679.500" stroke="#5fa9a4" stroke-width="1.600"/>
<text x="558.5" y="692.500" text-anchor="middle" font-size="12">3</text>
<path d="M670.7 674 V679.500" stroke="#5fa9a4" stroke-width="1.600"/>
<text x="670.4" y="692.500" text-anchor="middle" font-size="12">4</text>
<path d="M782.7 674 V679.500" stroke="#5fa9a4" stroke-width="1.600"/>
<text x="782.4" y="692.500" text-anchor="middle" font-size="12">5</text>
<path d="M894.6 674 V679.500" stroke="#5fa9a4" stroke-width="1.600"/>
<text x="894.3" y="692.500" text-anchor="middle" font-size="12">6</text>
<text x="536.500" y="230" text-anchor="middle" font-size="16">probe_e_field_time: probe no. 2</text>
<text x="579" y="711.500" text-anchor="middle" font-size="16">time(ns)</text>
<text transform="translate(142,434) rotate(-90)" text-anchor="middle" font-size="16">e</text>
<path d="M0 -7.600 L4.300 0.200 H2 V6.300 Q0 8.300 -2 6.300 V0.200 H-4.300 Z" transform="translate(218.200,247)" fill="#f2f2f2" stroke="#3a9bf5" stroke-width="1.200"/>
<path d="M0 -7.600 L4.300 0.200 H2 V6.300 Q0 8.300 -2 6.300 V0.200 H-4.300 Z" transform="translate(218.200,665.800) rotate(180)" fill="#f2f2f2" stroke="#3a9bf5" stroke-width="1.200"/>
<path d="M0 -7.600 L4.300 0.200 H2 V6.300 Q0 8.300 -2 6.300 V0.200 H-4.300 Z" transform="translate(225.500,672.800) rotate(-90)" fill="#f2f2f2" stroke="#3a9bf5" stroke-width="1.200"/>
<path d="M0 -7.600 L4.300 0.200 H2 V6.300 Q0 8.300 -2 6.300 V0.200 H-4.300 Z" transform="translate(932.400,672.800) rotate(90)" fill="#f2f2f2" stroke="#3a9bf5" stroke-width="1.200"/>
</svg>

<!-- bottom table -->
<div class="abs" style="left:37px;top:818px;width:1004px;height:35px;background:#f0f0f0;border-top:1px solid #dcdcdc"></div>
<div class="abs" style="left:37px;top:834px;width:1004px;height:1px;background:#dcdcdc"></div>
<div class="abs hdr" style="left:37px">X-Cursor</div>
<div class="abs hdr" style="left:180px">Y-Cursor</div>
<div class="abs hdr" style="left:324px">V-Caliper</div>
<div class="abs hdr" style="left:467px">H-Cal (dX)</div>
<div class="abs hdr" style="left:610px">H-Cal (1/dX)</div>
<div class="abs hdr" style="left:753px">Horz-D</div>
<div class="abs hdr" style="left:896px">Vert-D</div>
<div class="abs val" style="left:37px">-2.019e+00</div>
<div class="abs val" style="left:180px">3.585e+02</div>
<div class="abs sep" style="left:179px"></div>
<div class="abs sep" style="left:322px"></div>
<div class="abs sep" style="left:465px"></div>
<div class="abs sep" style="left:608px"></div>
<div class="abs sep" style="left:751px"></div>
<div class="abs sep" style="left:894px"></div>
<div class="abs sep" style="left:1037px"></div>

<!-- resize grip -->
<svg class="abs" style="left:1037px;top:872px" width="10" height="10" fill="#b0b0b0">
<rect x="7" y="1" width="2" height="2"/><rect x="4" y="4" width="2" height="2"/><rect x="7" y="4" width="2" height="2"/>
<rect x="1" y="7" width="2" height="2"/><rect x="4" y="7" width="2" height="2"/><rect x="7" y="7" width="2" height="2"/>
</svg>
</body>
</html>
